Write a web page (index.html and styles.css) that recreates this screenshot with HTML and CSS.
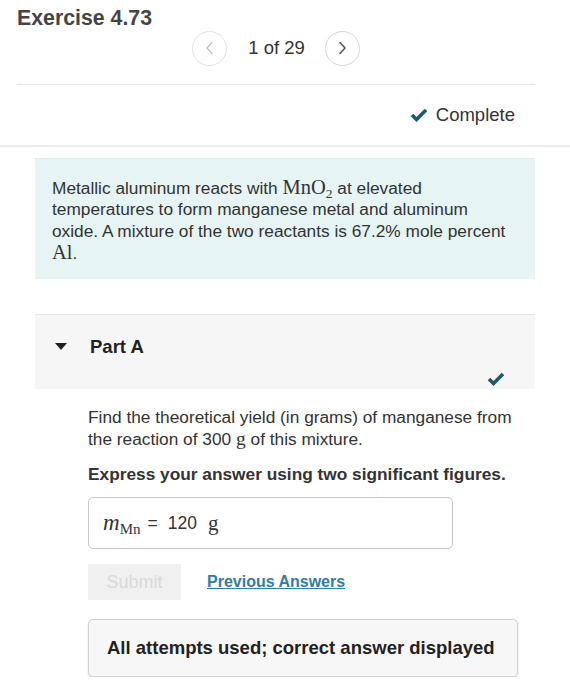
FILE: index.html
```html
<!DOCTYPE html>
<html>
<head>
<meta charset="utf-8">
<link rel="stylesheet" href="styles.css">
</head>
<body>
<div class="page">
  <header class="head">
    <h1 class="title">Exercise 4.73</h1>
    <div class="pager">
      <span class="nav nav-off"><svg width="12" height="14" viewBox="0 0 12 14"><path d="M8 1.5 L3 7 L8 12.5" fill="none" stroke="#c4c4c4" stroke-width="1.5" stroke-linecap="round" stroke-linejoin="round"/></svg></span>
      <span class="count">1 of 29</span>
      <span class="nav"><svg width="12" height="14" viewBox="0 0 12 14"><path d="M4 1.5 L9 7 L4 12.5" fill="none" stroke="#555" stroke-width="1.5" stroke-linecap="round" stroke-linejoin="round"/></svg></span>
    </div>
  </header>
  <div class="status">
    <svg class="check" width="18" height="14" viewBox="0 0 18 14"><path d="M2 7 L6.5 11.5 L16 2" fill="none" stroke="#1e5a6c" stroke-width="3.6"/></svg>
    <span>Complete</span>
  </div>
  <div class="rule"></div>
  <section class="intro">
    <p>Metallic aluminum reacts with <span class="math">MnO<sub>2</sub></span> at elevated temperatures to form manganese metal and aluminum oxide. A mixture of the two reactants is 67.2% mole percent <span class="math">Al</span>.</p>
  </section>
  <section class="part">
    <div class="part-head">
      <div class="part-title"><span class="tri"></span><span>Part A</span></div>
      <div class="part-check"><svg width="18" height="14" viewBox="0 0 18 14"><path d="M2 7 L6.5 11.5 L16 2" fill="none" stroke="#1e5a6c" stroke-width="3.6"/></svg></div>
    </div>
    <div class="part-body">
      <p class="q">Find the theoretical yield (in grams) of manganese from the reaction of 300 <span class="math">g</span> of this mixture.</p>
      <p class="instr">Express your answer using two significant figures.</p>
      <div class="answer"><span class="mvar">m<sub>Mn</sub></span><span class="eq">=</span><span class="val">120</span><span class="unit">g</span></div>
      <div class="actions">
        <span class="submit">Submit</span>
        <a class="prev" href="#">Previous Answers</a>
      </div>
      <div class="feedback">All attempts used; correct answer displayed</div>
    </div>
  </section>
</div>
</body>
</html>
```
FILE: styles.css
```css
html, body { margin: 0; padding: 0; background: #fff; }
body { font-family: "Liberation Sans", Arial, sans-serif; color: #333; }
.page { width: 570px; }
.head { padding: 0 35px 0 17px; }
.title { margin: 0; padding-top: 6px; font-size: 21.3px; line-height: 24px; font-weight: bold; color: #444; }
.pager { display: flex; justify-content: center; align-items: center; height: 36px; margin-top: 0; padding-bottom: 18px; border-bottom: 1.5px solid #e3e3e3; }
.nav { width: 35px; height: 35px; border: 1.5px solid #e2e2e2; border-radius: 50%; display: flex; align-items: center; justify-content: center; box-sizing: border-box; }
.nav:last-child { border-color: #d6d6d6; }
.count { font-size: 18.5px; margin: 0 20px 0 21px; color: #333; }
.status { display: flex; justify-content: flex-end; align-items: center; gap: 8px; padding: 0 55px 0 0; height: 60px; font-size: 18.5px; color: #333; }
.rule { height: 0; border-top: 2px solid #ececec; }
.intro { margin: 11px 35px 0 35px; background: #e6f4f4; border-top: 1px solid #e0ecec; padding: 18px 17px 15px; }
.intro p { margin: 0; font-size: 17.3px; line-height: 21.3px; color: #333; }
.math { font-family: "Liberation Serif", "Times New Roman", serif; font-size: 20.5px; }
.math sub { font-size: 13.5px; vertical-align: -4px; line-height: 0; }
.part { margin: 35px 35px 0 35px; border-top: 1.5px solid #e6e6e6; }
.part-head { background: #f6f6f6; padding: 0 0 0 20px; height: 74px; position: relative; }
.part-title { display: flex; align-items: center; height: 63px; font-size: 18.5px; font-weight: bold; color: #222; }
.tri { width: 0; height: 0; border-left: 6px solid transparent; border-right: 6px solid transparent; border-top: 7px solid #222; margin-right: 23px; }
.part-check { position: absolute; right: 30px; bottom: -1px; }
.part-body { padding: 17px 0 0 53px; }
.q { margin: 0; font-size: 17.3px; line-height: 22px; color: #333; padding-right: 20px; }
.q .math { font-size: 19.5px; }
.instr { margin: 14px 0 0; font-size: 17.3px; font-weight: bold; color: #333; }
.answer { margin-top: 12px; width: 365px; height: 52px; box-sizing: border-box; border: 1.5px solid #c6c6c6; border-radius: 5px; display: flex; align-items: center; padding-left: 14px; font-size: 17.5px; color: #333; }
.mvar { font-family: "Liberation Serif", "Times New Roman", serif; font-style: italic; font-size: 23px; }
.mvar sub { font-style: normal; font-size: 15px; vertical-align: -4px; line-height: 0; }
.eq { margin: 0 10px 0 7px; }
.val { margin-right: 11px; }
.unit { font-family: "Liberation Serif", "Times New Roman", serif; font-size: 21px; }
.actions { display: flex; align-items: center; margin-top: 15px; gap: 26px; }
.submit { width: 93px; height: 36px; background: #f0f0f0; color: #d8d8d8; font-size: 18px; display: flex; align-items: center; justify-content: center; }
.prev { color: #2f7ea3; font-weight: bold; font-size: 16px; text-decoration: underline; }
.feedback { margin-top: 19px; width: 430px; height: 58px; box-sizing: border-box; background: #f7f7f7; border: 1.5px solid #d2d2d2; border-radius: 5px; box-shadow: 0 1px 2px rgba(0,0,0,0.15); display: flex; align-items: center; padding-left: 18px; font-size: 18.5px; font-weight: bold; color: #222; }
```
